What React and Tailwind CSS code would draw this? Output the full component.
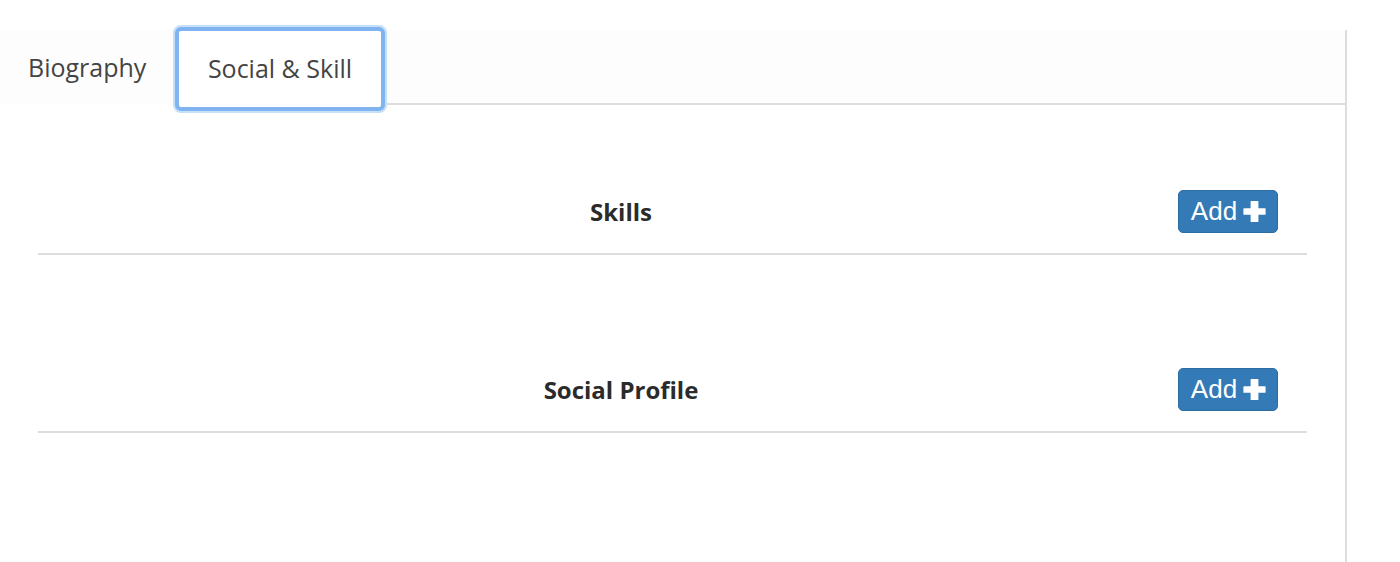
import React from "react";

function PlusIcon() {
  return (
    <svg width="23" height="23" viewBox="0 0 23 23" aria-hidden="true">
      <path
        d="M8.2 1h6.6a.6.6 0 0 1 .6.6v6.6h6.6a.6.6 0 0 1 .6.6v5.4a.6.6 0 0 1-.6.6h-6.6v6.6a.6.6 0 0 1-.6.6H8.2a.6.6 0 0 1-.6-.6v-6.6H1a.6.6 0 0 1-.6-.6V8.8a.6.6 0 0 1 .6-.6h6.6V1.6a.6.6 0 0 1 .6-.6z"
        fill="#ffffff"
      />
    </svg>
  );
}

function AddButton() {
  return (
    <button className="justify-self-end mr-[29px] w-[100px] h-[43px] rounded-[5px] bg-[#337ab7] border border-[#2e6da4] flex items-center justify-center gap-[6px] text-white text-[26px] font-['Liberation_Sans',Arial,sans-serif] leading-none">
      <span className="-mt-[1px] ml-[1px]">Add</span>
      <PlusIcon />
    </button>
  );
}

function SectionHeader({ title }) {
  return (
    <div className="grid items-center pb-[20px] border-b-2 border-[#dddddd]">
      <div className="col-start-1 row-start-1 w-[1166px] text-center text-[24px] font-bold text-[#2b2b2b]">
        {title}
      </div>
      <div className="col-start-1 row-start-1 grid">
        <AddButton />
      </div>
    </div>
  );
}

export default function App() {
  return (
    <div className="w-[1400px] h-[562px] bg-white overflow-hidden font-['Open_Sans',sans-serif]">
      <div className="w-[1347px] pt-[30px]">
        <div className="flex h-[75px] bg-[#fdfdfd]">
          <div className="w-[175px] pl-[28px] flex items-center text-[25px] text-[#444444]">
            Biography
          </div>
          <div className="-mt-[3px] -mb-[6px] w-[210px] rounded-[6px] border-[4px] border-[#7fb4f1] shadow-[0_0_0_2px_#c6e0fa] bg-white flex items-center justify-center text-[25px] text-[#444444]">
            <span className="-mt-[1px]">Social &amp; Skill</span>
          </div>
          <div className="flex-1 border-b-2 border-r-2 border-[#dddddd]" />
        </div>
        <div className="h-[457px] border-r-2 border-[#dddddd] px-[38px] pt-[85px]">
          <SectionHeader title="Skills" />
          <div className="h-[113px]" />
          <SectionHeader title="Social Profile" />
        </div>
      </div>
    </div>
  );
}
